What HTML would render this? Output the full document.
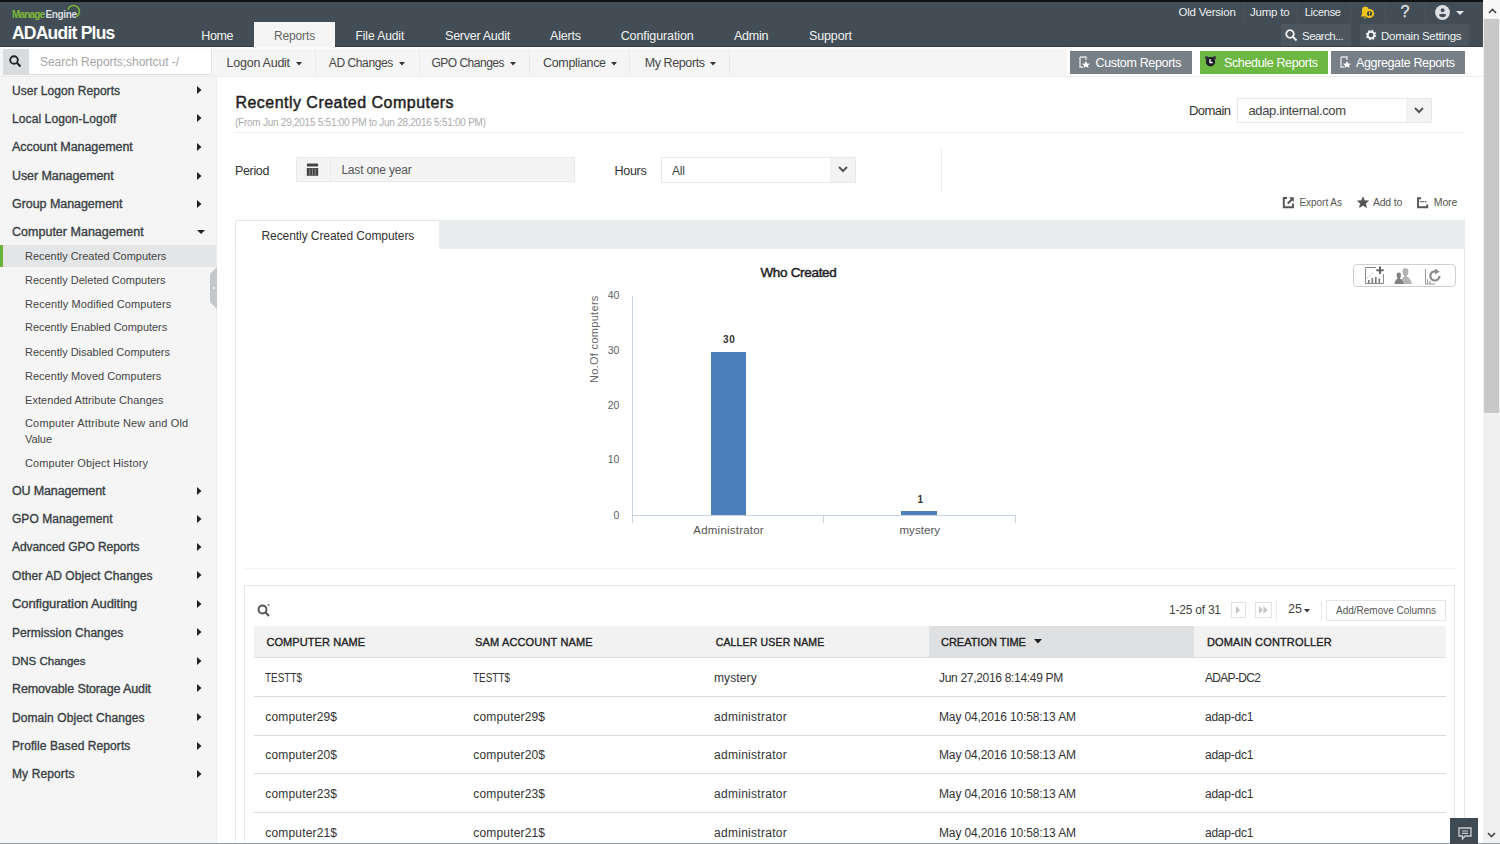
<!DOCTYPE html>
<html><head><meta charset="utf-8"><style>
html,body{margin:0;padding:0;width:1500px;height:844px;overflow:hidden;background:#fff;}
.t{position:absolute;white-space:nowrap;line-height:1;font-family:"Liberation Sans",sans-serif;}
svg{position:absolute;}
</style></head><body>
<div style="position:absolute;left:0px;top:0px;width:1483px;height:47px;background:#424d55;"></div>
<div style="position:absolute;left:0px;top:46px;width:1483px;height:1px;background:#384147;"></div>
<div style="position:absolute;left:0px;top:0px;width:1483px;height:2px;background:#101214;"></div>
<div class="t" style="left:12.0px;top:10.00px;font-size:10.0px;font-weight:bold;color:#7dbb3a;letter-spacing:-0.846px;">Manage</div>
<div class="t" style="left:45.5px;top:10.00px;font-size:10.0px;font-weight:bold;color:#d8dde0;letter-spacing:-0.367px;">Engine</div>
<svg style="left:64px;top:3px" width="20" height="18" viewBox="0 0 20 18"><path d="M3.86 6.45 A6 6 0 1 1 12.5 13.7" stroke="#74b53a" stroke-width="1.6" fill="none"/></svg>
<div class="t" style="left:12.0px;top:25.00px;font-size:17.5px;font-weight:bold;color:#ffffff;letter-spacing:-0.773px;">ADAudit Plus</div>
<div style="position:absolute;left:254px;top:22px;width:81px;height:25px;background:#f5f5f5;"></div>
<div class="t" style="left:201.3px;top:30.00px;font-size:12.5px;color:#f2f2f2;letter-spacing:-0.381px;">Home</div>
<div class="t" style="left:355.5px;top:30.00px;font-size:12.0px;color:#f2f2f2;letter-spacing:-0.062px;">File Audit</div>
<div class="t" style="left:445.1px;top:30.00px;font-size:12.5px;color:#f2f2f2;letter-spacing:-0.272px;">Server Audit</div>
<div class="t" style="left:550.0px;top:30.00px;font-size:12.5px;color:#f2f2f2;letter-spacing:-0.190px;">Alerts</div>
<div class="t" style="left:620.7px;top:30.00px;font-size:12.5px;color:#f2f2f2;letter-spacing:-0.112px;">Configuration</div>
<div class="t" style="left:734.0px;top:30.00px;font-size:12.5px;color:#f2f2f2;letter-spacing:-0.232px;">Admin</div>
<div class="t" style="left:809.0px;top:30.00px;font-size:12.5px;color:#f2f2f2;letter-spacing:-0.130px;">Support</div>
<div class="t" style="left:273.9px;top:30.00px;font-size:12.0px;color:#666;letter-spacing:-0.119px;">Reports</div>
<div class="t" style="left:1178.4px;top:7.00px;font-size:11.5px;color:#eef0f1;letter-spacing:-0.205px;">Old Version</div>
<div class="t" style="left:1250.0px;top:7.00px;font-size:11.5px;color:#eef0f1;letter-spacing:-0.217px;">Jump to</div>
<div class="t" style="left:1304.7px;top:7.00px;font-size:11.0px;color:#eef0f1;letter-spacing:-0.269px;">License</div>
<div style="position:absolute;left:1243px;top:3px;width:1px;height:19px;background:#4b555d;"></div>
<div style="position:absolute;left:1297px;top:3px;width:1px;height:19px;background:#4b555d;"></div>
<div style="position:absolute;left:1350px;top:3px;width:1px;height:19px;background:#4b555d;"></div>
<div style="position:absolute;left:1385px;top:3px;width:1px;height:19px;background:#4b555d;"></div>
<div style="position:absolute;left:1425px;top:3px;width:1px;height:19px;background:#4b555d;"></div>
<svg style="left:1359px;top:5px" width="17" height="15" viewBox="0 0 17 15"><path d="M1.5 11.5 L3 9.5 V5.5 Q3 1.5 6.5 1.5 Q9 1.5 9.8 4 L9 11.5Z" fill="#f0c419"/><circle cx="10.5" cy="8.5" r="4.6" fill="#f0c419"/><circle cx="10.5" cy="8.5" r="2.6" fill="#3d474e"/><rect x="10" y="6.6" width="1.1" height="2.6" fill="#f0c419"/><rect x="10" y="9.8" width="1.1" height="1" fill="#f0c419"/><path d="M4.5 12.5 Q6 14.5 7.5 12.5Z" fill="#f0c419"/></svg>
<div class="t" style="left:1400.5px;top:4.00px;font-size:16.0px;color:#d9dcde;letter-spacing:0.000px;-webkit-text-stroke:0.45px #d9dcde;">?</div>
<svg style="left:1435px;top:5px" width="15" height="15" viewBox="0 0 15 15"><circle cx="7.5" cy="7.5" r="7.4" fill="#dde0e2"/><circle cx="7.6" cy="5.2" r="1.9" fill="#434d55"/><path d="M4 9.5 Q7.6 8 11.2 9.5 Q11 12 7.6 12.2 Q4.2 12 4 9.5Z" fill="#434d55"/></svg>
<svg style="left:1456px;top:11px" width="8" height="4" viewBox="0 0 8 4"><path d="M0 0H8L4 4Z" fill="#e6e9ea"/></svg>
<div style="position:absolute;left:1281px;top:24px;width:70px;height:22px;background:#4b565e;"></div>
<div style="position:absolute;left:1360px;top:24px;width:109px;height:22px;background:#4b565e;"></div>
<svg style="left:1285px;top:29px" width="13" height="13" viewBox="0 0 13 13"><circle cx="5" cy="5" r="3.8" stroke="#f0f0f0" stroke-width="1.8" fill="none"/><path d="M7.8 7.8 L11.5 11.5" stroke="#f0f0f0" stroke-width="2"/></svg>
<div class="t" style="left:1302.0px;top:31.00px;font-size:11.5px;color:#eef0f1;letter-spacing:-0.540px;">Search...</div>
<svg style="left:1365px;top:29px" width="12" height="12" viewBox="0 0 12 12"><circle cx="6" cy="6" r="3.3" stroke="#eef0f1" stroke-width="2" fill="none"/><circle cx="6" cy="6" r="4.6" stroke="#eef0f1" stroke-width="1.3" stroke-dasharray="1.8 1.81" fill="none"/></svg>
<div class="t" style="left:1381.0px;top:31.00px;font-size:11.5px;color:#eef0f1;letter-spacing:-0.269px;">Domain Settings</div>
<div style="position:absolute;left:0px;top:47px;width:1483px;height:30px;background:#f5f5f5;"></div>
<div style="position:absolute;left:0px;top:47px;width:1483px;height:2px;background:#fbfbfb;"></div>
<div style="position:absolute;left:0px;top:76px;width:1483px;height:1px;background:#ebebeb;"></div>
<div style="position:absolute;left:3px;top:49px;width:26px;height:26px;background:#d8dcde;"></div>
<div style="position:absolute;left:29px;top:49px;width:183px;height:26px;background:#ffffff;box-sizing:border-box;border-bottom:1px solid #dedede;border-right:1px solid #e2e2e2;"></div>
<svg style="left:9px;top:55px" width="13" height="13" viewBox="0 0 13 13"><circle cx="5" cy="5" r="3.8" stroke="#222" stroke-width="1.9" fill="none"/><path d="M7.8 7.8 L11.5 11.5" stroke="#222" stroke-width="2.1"/></svg>
<div class="t" style="left:40.0px;top:56.00px;font-size:12.0px;color:#a5a5a5;letter-spacing:-0.042px;">Search Reports;shortcut -/</div>
<div class="t" style="left:226.6px;top:57.00px;font-size:12.5px;color:#454545;letter-spacing:-0.253px;">Logon Audit</div>
<svg style="left:295.5px;top:62px" width="6" height="4" viewBox="0 0 6 4"><path d="M0 0H6L3 3.5Z" fill="#333"/></svg>
<div class="t" style="left:328.8px;top:57.00px;font-size:12.0px;color:#454545;letter-spacing:-0.404px;">AD Changes</div>
<svg style="left:398.6px;top:62px" width="6" height="4" viewBox="0 0 6 4"><path d="M0 0H6L3 3.5Z" fill="#333"/></svg>
<div class="t" style="left:431.4px;top:57.00px;font-size:12.0px;color:#454545;letter-spacing:-0.494px;">GPO Changes</div>
<svg style="left:510px;top:62px" width="6" height="4" viewBox="0 0 6 4"><path d="M0 0H6L3 3.5Z" fill="#333"/></svg>
<div class="t" style="left:543.0px;top:57.00px;font-size:12.5px;color:#454545;letter-spacing:-0.333px;">Compliance</div>
<svg style="left:611px;top:62px" width="6" height="4" viewBox="0 0 6 4"><path d="M0 0H6L3 3.5Z" fill="#333"/></svg>
<div class="t" style="left:644.7px;top:57.00px;font-size:12.5px;color:#454545;letter-spacing:-0.400px;">My Reports</div>
<svg style="left:710.4px;top:62px" width="6" height="4" viewBox="0 0 6 4"><path d="M0 0H6L3 3.5Z" fill="#333"/></svg>
<div style="position:absolute;left:315px;top:50px;width:1px;height:24px;background:#e9e9e9;"></div>
<div style="position:absolute;left:419px;top:50px;width:1px;height:24px;background:#e9e9e9;"></div>
<div style="position:absolute;left:529px;top:50px;width:1px;height:24px;background:#e9e9e9;"></div>
<div style="position:absolute;left:629px;top:50px;width:1px;height:24px;background:#e9e9e9;"></div>
<div style="position:absolute;left:729px;top:50px;width:1px;height:24px;background:#e9e9e9;"></div>
<div style="position:absolute;left:1067px;top:47px;width:416px;height:29px;background:#ffffff;"></div>
<div style="position:absolute;left:1070px;top:51px;width:122px;height:23px;background:#788087;"></div>
<div style="position:absolute;left:1070px;top:51px;width:122px;height:1px;background:#6f777d;"></div>
<div style="position:absolute;left:1200px;top:51px;width:128px;height:23px;background:#6db842;"></div>
<div style="position:absolute;left:1331px;top:51px;width:134px;height:23px;background:#788087;"></div>
<div style="position:absolute;left:1331px;top:51px;width:134px;height:1px;background:#6f777d;"></div>
<div class="t" style="left:1095.5px;top:57.00px;font-size:12.5px;color:#ffffff;letter-spacing:-0.339px;">Custom Reports</div>
<div class="t" style="left:1224.0px;top:57.00px;font-size:12.5px;color:#ffffff;letter-spacing:-0.357px;">Schedule Reports</div>
<div class="t" style="left:1356.0px;top:57.00px;font-size:12.5px;color:#ffffff;letter-spacing:-0.370px;">Aggregate Reports</div>
<svg style="left:1079px;top:56px" width="11" height="12" viewBox="0 0 11 12"><path d="M1 1H7V4" stroke="#dfe2e4" stroke-width="1.4" fill="none"/><path d="M1 1V11H4" stroke="#dfe2e4" stroke-width="1.4" fill="none"/><path d="M7 5 L8.2 7.6 L11 7.8 L8.9 9.5 L9.6 12 L7 10.6 L4.4 12 L5.1 9.5 L3 7.8 L5.8 7.6Z" fill="#fff"/></svg>
<svg style="left:1340px;top:56px" width="11" height="12" viewBox="0 0 11 12"><path d="M1 1H7V4" stroke="#dfe2e4" stroke-width="1.4" fill="none"/><path d="M1 1V11H4" stroke="#dfe2e4" stroke-width="1.4" fill="none"/><path d="M7 5 L8.2 7.6 L11 7.8 L8.9 9.5 L9.6 12 L7 10.6 L4.4 12 L5.1 9.5 L3 7.8 L5.8 7.6Z" fill="#fff"/></svg>
<svg style="left:1204px;top:55px" width="13" height="13" viewBox="0 0 13 13"><circle cx="2.6" cy="2.8" r="1.8" fill="#3a3d40"/><circle cx="10.4" cy="2.8" r="1.8" fill="#3a3d40"/><circle cx="6.5" cy="6.8" r="4.7" fill="#1c1b26"/><path d="M6 4V7.5H8.6" stroke="#fff" stroke-width="1.3" fill="none"/></svg>
<div style="position:absolute;left:0px;top:77px;width:216px;height:767px;background:#f5f5f5;"></div>
<div style="position:absolute;left:216px;top:77px;width:1px;height:767px;background:#ececec;"></div>
<div style="position:absolute;left:0px;top:245px;width:216px;height:22px;background:#e4e5e6;"></div>
<div style="position:absolute;left:0px;top:245px;width:3px;height:22px;background:#6ab23d;"></div>
<svg style="left:209px;top:267px" width="8" height="42" viewBox="0 0 8 42"><path d="M8 0V42L1 35V7Z" fill="#c3c7c9"/><path d="M3.5 21L5.5 19.5V22.5Z" fill="#fff"/></svg>
<div class="t" style="left:12.0px;top:85.00px;font-size:12.0px;color:#3a3f44;letter-spacing:0.036px;-webkit-text-stroke:0.35px #3a3f44;">User Logon Reports</div>
<svg style="left:197px;top:86.1px" width="5" height="8" viewBox="0 0 5 8"><path d="M0 0V8L4.5 4Z" fill="#222"/></svg>
<div class="t" style="left:12.0px;top:113.00px;font-size:12.0px;color:#3a3f44;letter-spacing:0.099px;-webkit-text-stroke:0.35px #3a3f44;">Local Logon-Logoff</div>
<svg style="left:197px;top:114.2px" width="5" height="8" viewBox="0 0 5 8"><path d="M0 0V8L4.5 4Z" fill="#222"/></svg>
<div class="t" style="left:12.0px;top:141.00px;font-size:12.5px;color:#3a3f44;letter-spacing:-0.047px;-webkit-text-stroke:0.35px #3a3f44;">Account Management</div>
<svg style="left:197px;top:142.6px" width="5" height="8" viewBox="0 0 5 8"><path d="M0 0V8L4.5 4Z" fill="#222"/></svg>
<div class="t" style="left:12.0px;top:170.00px;font-size:12.5px;color:#3a3f44;letter-spacing:-0.080px;-webkit-text-stroke:0.35px #3a3f44;">User Management</div>
<svg style="left:197px;top:171.6px" width="5" height="8" viewBox="0 0 5 8"><path d="M0 0V8L4.5 4Z" fill="#222"/></svg>
<div class="t" style="left:12.0px;top:198.00px;font-size:12.5px;color:#3a3f44;letter-spacing:-0.051px;-webkit-text-stroke:0.35px #3a3f44;">Group Management</div>
<svg style="left:197px;top:199.6px" width="5" height="8" viewBox="0 0 5 8"><path d="M0 0V8L4.5 4Z" fill="#222"/></svg>
<div class="t" style="left:12.0px;top:226.00px;font-size:12.5px;color:#3a3f44;letter-spacing:0.016px;-webkit-text-stroke:0.35px #3a3f44;">Computer Management</div>
<svg style="left:197px;top:229.6px" width="8" height="5" viewBox="0 0 8 5"><path d="M0 0H8L4 4Z" fill="#222"/></svg>
<div class="t" style="left:12.0px;top:485.00px;font-size:12.5px;color:#3a3f44;letter-spacing:-0.148px;-webkit-text-stroke:0.35px #3a3f44;">OU Management</div>
<svg style="left:197px;top:486.8px" width="5" height="8" viewBox="0 0 5 8"><path d="M0 0V8L4.5 4Z" fill="#222"/></svg>
<div class="t" style="left:12.0px;top:513.00px;font-size:12.0px;color:#3a3f44;letter-spacing:0.035px;-webkit-text-stroke:0.35px #3a3f44;">GPO Management</div>
<svg style="left:197px;top:514.7px" width="5" height="8" viewBox="0 0 5 8"><path d="M0 0V8L4.5 4Z" fill="#222"/></svg>
<div class="t" style="left:12.0px;top:541.00px;font-size:12.0px;color:#3a3f44;letter-spacing:-0.059px;-webkit-text-stroke:0.35px #3a3f44;">Advanced GPO Reports</div>
<svg style="left:197px;top:542.6px" width="5" height="8" viewBox="0 0 5 8"><path d="M0 0V8L4.5 4Z" fill="#222"/></svg>
<div class="t" style="left:12.0px;top:570.00px;font-size:12.0px;color:#3a3f44;letter-spacing:0.076px;-webkit-text-stroke:0.35px #3a3f44;">Other AD Object Changes</div>
<svg style="left:197px;top:571.0px" width="5" height="8" viewBox="0 0 5 8"><path d="M0 0V8L4.5 4Z" fill="#222"/></svg>
<div class="t" style="left:12.0px;top:597.00px;font-size:13.0px;color:#3a3f44;letter-spacing:-0.090px;-webkit-text-stroke:0.35px #3a3f44;">Configuration Auditing</div>
<svg style="left:197px;top:599.8px" width="5" height="8" viewBox="0 0 5 8"><path d="M0 0V8L4.5 4Z" fill="#222"/></svg>
<div class="t" style="left:12.0px;top:627.00px;font-size:12.0px;color:#3a3f44;letter-spacing:0.029px;-webkit-text-stroke:0.35px #3a3f44;">Permission Changes</div>
<svg style="left:197px;top:628.2px" width="5" height="8" viewBox="0 0 5 8"><path d="M0 0V8L4.5 4Z" fill="#222"/></svg>
<div class="t" style="left:12.0px;top:656.00px;font-size:11.5px;color:#3a3f44;letter-spacing:-0.001px;-webkit-text-stroke:0.35px #3a3f44;">DNS Changes</div>
<svg style="left:197px;top:656.5px" width="5" height="8" viewBox="0 0 5 8"><path d="M0 0V8L4.5 4Z" fill="#222"/></svg>
<div class="t" style="left:12.0px;top:683.00px;font-size:12.5px;color:#3a3f44;letter-spacing:-0.125px;-webkit-text-stroke:0.35px #3a3f44;">Removable Storage Audit</div>
<svg style="left:197px;top:684.4px" width="5" height="8" viewBox="0 0 5 8"><path d="M0 0V8L4.5 4Z" fill="#222"/></svg>
<div class="t" style="left:12.0px;top:712.00px;font-size:12.0px;color:#3a3f44;letter-spacing:0.084px;-webkit-text-stroke:0.35px #3a3f44;">Domain Object Changes</div>
<svg style="left:197px;top:713.2px" width="5" height="8" viewBox="0 0 5 8"><path d="M0 0V8L4.5 4Z" fill="#222"/></svg>
<div class="t" style="left:12.0px;top:740.00px;font-size:12.0px;color:#3a3f44;letter-spacing:0.079px;-webkit-text-stroke:0.35px #3a3f44;">Profile Based Reports</div>
<svg style="left:197px;top:741.6px" width="5" height="8" viewBox="0 0 5 8"><path d="M0 0V8L4.5 4Z" fill="#222"/></svg>
<div class="t" style="left:12.0px;top:768.00px;font-size:12.0px;color:#3a3f44;letter-spacing:0.117px;-webkit-text-stroke:0.35px #3a3f44;">My Reports</div>
<svg style="left:197px;top:770.0px" width="5" height="8" viewBox="0 0 5 8"><path d="M0 0V8L4.5 4Z" fill="#222"/></svg>
<div class="t" style="left:25.0px;top:251.00px;font-size:11.0px;color:#454545;letter-spacing:-0.021px;">Recently Created Computers</div>
<div class="t" style="left:25.0px;top:275.00px;font-size:11.0px;color:#454545;letter-spacing:-0.005px;">Recently Deleted Computers</div>
<div class="t" style="left:25.0px;top:299.00px;font-size:11.0px;color:#454545;letter-spacing:0.074px;">Recently Modified Computers</div>
<div class="t" style="left:25.0px;top:322.00px;font-size:11.0px;color:#454545;letter-spacing:-0.035px;">Recently Enabled Computers</div>
<div class="t" style="left:25.0px;top:347.00px;font-size:11.0px;color:#454545;letter-spacing:-0.019px;">Recently Disabled Computers</div>
<div class="t" style="left:25.0px;top:371.00px;font-size:11.0px;color:#454545;letter-spacing:0.021px;">Recently Moved Computers</div>
<div class="t" style="left:25.0px;top:395.00px;font-size:11.0px;color:#454545;letter-spacing:0.061px;">Extended Attribute Changes</div>
<div class="t" style="left:25.0px;top:418.00px;font-size:11.0px;color:#454545;letter-spacing:0.167px;">Computer Attribute New and Old</div>
<div class="t" style="left:25.0px;top:434.00px;font-size:11.0px;color:#454545;letter-spacing:-0.079px;">Value</div>
<div class="t" style="left:25.0px;top:458.00px;font-size:11.0px;color:#454545;letter-spacing:0.113px;">Computer Object History</div>
<div class="t" style="left:235.4px;top:95.00px;font-size:16.0px;color:#1e1e1e;letter-spacing:0.476px;-webkit-text-stroke:0.45px #1e1e1e;">Recently Created Computers</div>
<div class="t" style="left:235.0px;top:118.00px;font-size:10.0px;color:#ababab;letter-spacing:-0.252px;">(From Jun 29,2015 5:51:00 PM to Jun 28,2016 5:51:00 PM)</div>
<div style="position:absolute;left:235px;top:132px;width:1228px;height:1px;background:#f0f0f0;"></div>
<div class="t" style="left:1189.0px;top:104.00px;font-size:13.0px;color:#333;letter-spacing:-0.559px;">Domain</div>
<div style="position:absolute;left:1237px;top:98px;width:195px;height:25px;background:#fff;box-sizing:border-box;border:1px solid #e8e8e8;"></div>
<div style="position:absolute;left:1406px;top:99px;width:25px;height:23px;background:#f3f3f3;"></div>
<div class="t" style="left:1248.5px;top:104.00px;font-size:13.0px;color:#444;letter-spacing:-0.364px;">adap.internal.com</div>
<svg style="left:1414px;top:107px" width="10" height="7" viewBox="0 0 10 7"><path d="M1 1L5 5L9 1" stroke="#555" stroke-width="2" fill="none"/></svg>
<div class="t" style="left:235.0px;top:165.00px;font-size:12.5px;color:#333;letter-spacing:-0.346px;">Period</div>
<div style="position:absolute;left:296px;top:157px;width:279px;height:25px;background:#f4f4f4;box-sizing:border-box;border:1px solid #e9e9e9;"></div>
<div style="position:absolute;left:330px;top:158px;width:1px;height:23px;background:#e9e9e9;"></div>
<svg style="left:306px;top:163px" width="13" height="13" viewBox="0 0 13 13"><rect x="0.8" y="0.6" width="11.4" height="3" rx="1.2" fill="#444"/><rect x="0.8" y="5" width="11.4" height="7.8" fill="#444"/><g fill="#9a9a9a"><rect x="3.4" y="5.4" width="0.8" height="7"/><rect x="6.1" y="5.4" width="0.8" height="7"/><rect x="8.8" y="5.4" width="0.8" height="7"/></g></svg>
<div class="t" style="left:341.4px;top:164.00px;font-size:12.0px;color:#555;letter-spacing:-0.201px;">Last one year</div>
<div class="t" style="left:614.4px;top:165.00px;font-size:12.5px;color:#333;letter-spacing:-0.235px;">Hours</div>
<div style="position:absolute;left:661px;top:157px;width:195px;height:26px;background:#fff;box-sizing:border-box;border:1px solid #e9e9e9;"></div>
<div style="position:absolute;left:830px;top:158px;width:25px;height:24px;background:#f3f3f3;"></div>
<div class="t" style="left:672.0px;top:165.00px;font-size:12.0px;color:#444;letter-spacing:-0.168px;">All</div>
<svg style="left:838px;top:166px" width="10" height="7" viewBox="0 0 10 7"><path d="M1 1L5 5L9 1" stroke="#555" stroke-width="2" fill="none"/></svg>
<div style="position:absolute;left:941px;top:148px;width:1px;height:44px;background:#ececec;"></div>
<svg style="left:1282px;top:196px" width="13" height="13" viewBox="0 0 13 13"><path d="M5 2H1.8V11.2H11V7.5" stroke="#555" stroke-width="1.9" fill="none"/><path d="M5.8 7.5L10 3.3" stroke="#555" stroke-width="2"/><path d="M7 1.2H11.8V6Z" fill="#555"/></svg>
<div class="t" style="left:1299.4px;top:198.00px;font-size:10.0px;color:#555;letter-spacing:-0.025px;">Export As</div>
<svg style="left:1357px;top:197px" width="12" height="11" viewBox="0 0 24 23"><path d="M12 0L15.2 7.6L23.5 8.2L17.2 13.5L19.3 22L12 17.3L4.7 22L6.8 13.5L0.5 8.2L8.8 7.6Z" fill="#555" stroke="#555" stroke-width="1.5" stroke-linejoin="round"/></svg>
<div class="t" style="left:1372.9px;top:197.00px;font-size:10.5px;color:#555;letter-spacing:-0.191px;">Add to</div>
<svg style="left:1416px;top:196px" width="13" height="13" viewBox="0 0 13 13"><path d="M5 2.2H2V11.2H11.2V8.5" stroke="#555" stroke-width="1.9" fill="none"/><path d="M4.2 5.6H11.2" stroke="#555" stroke-width="1.2" stroke-dasharray="1.6 0.7"/></svg>
<div class="t" style="left:1433.8px;top:197.00px;font-size:10.5px;color:#555;letter-spacing:-0.140px;">More</div>
<div style="position:absolute;left:235px;top:220px;width:1230px;height:29px;background:#e9eced;"></div>
<div style="position:absolute;left:235px;top:220px;width:204px;height:29px;background:#ffffff;box-sizing:border-box;border:1px solid #e6e6e6;border-bottom:none;border-right:none;"></div>
<div class="t" style="left:261.5px;top:230.00px;font-size:12.0px;color:#333;letter-spacing:-0.077px;">Recently Created Computers</div>
<div style="position:absolute;left:235px;top:249px;width:1px;height:595px;background:#e8e8e8;"></div>
<div style="position:absolute;left:1464px;top:249px;width:1px;height:595px;background:#e8e8e8;"></div>
<div class="t" style="left:760.4px;top:266.00px;font-size:13.5px;color:#222;letter-spacing:-0.313px;-webkit-text-stroke:0.45px #222;">Who Created</div>
<div style="position:absolute;left:1353px;top:264px;width:103px;height:23px;background:#fff;box-sizing:border-box;border:1px solid #cfcfcf;border-radius:4px;"></div>
<svg style="left:1364px;top:266px" width="22" height="19" viewBox="0 0 22 19"><path d="M1.5 1.5H12M1.5 1.5V17.5H19.5V8" stroke="#8a8a8a" stroke-width="1" fill="none"/><path d="M3 12L9 7" stroke="#aaa" stroke-width="1" stroke-dasharray="1.2 1"/><rect x="4" y="14" width="1.6" height="3" fill="#7a7a7a"/><rect x="7.5" y="12" width="1.6" height="5" fill="#7a7a7a"/><rect x="11" y="11" width="1.6" height="6" fill="#7a7a7a"/><rect x="14.5" y="12.5" width="1.6" height="4.5" fill="#7a7a7a"/><path d="M16 0.5V8M12.3 4.2H19.7" stroke="#666" stroke-width="2"/></svg>
<svg style="left:1394px;top:267px" width="19" height="18" viewBox="0 0 19 18"><path d="M6.5 17 Q7 11 10.5 9.5 Q8.5 7.5 8.5 4.5 Q8.5 1 11.5 1 Q14.5 1 14.5 4.5 Q14.5 7.5 12.5 9.5 Q17 11 18 17Z" fill="#b4b4b4"/><path d="M0.5 17 Q1 12.5 3.8 11.5 Q2.6 10 2.6 7.8 Q2.6 5.5 4.8 5.5 Q7 5.5 7 7.8 Q7 10 5.8 11.5 Q9 12.5 9.5 17Z" fill="#808080"/></svg>
<svg style="left:1424px;top:267px" width="19" height="18" viewBox="0 0 19 18"><path d="M1.5 2V17H11" stroke="#9a9a9a" stroke-width="1" fill="none"/><rect x="3" y="12" width="1.2" height="5" fill="#aaa"/><rect x="5.5" y="14" width="1.2" height="3" fill="#aaa"/><path d="M15.5 9 A4.6 4.6 0 1 1 12.5 4.6" stroke="#8a8a8a" stroke-width="2.2" fill="none"/><path d="M11 1.5L15.5 4.6L11.2 7.6Z" fill="#8a8a8a"/></svg>
<div style="position:absolute;left:632px;top:296px;width:1px;height:227px;background:#c8d3e0;"></div>
<div style="position:absolute;left:632px;top:515px;width:384px;height:1px;background:#c8d3e0;"></div>
<div style="position:absolute;left:823px;top:515px;width:1px;height:8px;background:#c8d3e0;"></div>
<div style="position:absolute;left:1015px;top:515px;width:1px;height:8px;background:#c8d3e0;"></div>
<div class="t" style="left:607.7px;top:290.00px;font-size:10.5px;color:#606060;letter-spacing:0.000px;">40</div>
<div class="t" style="left:607.7px;top:345.00px;font-size:10.5px;color:#606060;letter-spacing:0.000px;">30</div>
<div class="t" style="left:607.7px;top:400.00px;font-size:10.5px;color:#606060;letter-spacing:0.000px;">20</div>
<div class="t" style="left:607.7px;top:454.00px;font-size:10.5px;color:#606060;letter-spacing:0.000px;">10</div>
<div class="t" style="left:613.5px;top:510.00px;font-size:10.5px;color:#606060;letter-spacing:0.000px;">0</div>
<div style="position:absolute;left:711px;top:352px;width:35px;height:163px;background:#4a81bd;"></div>
<div style="position:absolute;left:901px;top:511px;width:36px;height:4px;background:#4a81bd;"></div>
<div class="t" style="left:723.0px;top:335.00px;font-size:10.0px;font-weight:bold;color:#333;letter-spacing:0.578px;">30</div>
<div class="t" style="left:917.4px;top:495.00px;font-size:10.0px;font-weight:bold;color:#333;letter-spacing:0.000px;">1</div>
<div class="t" style="left:693.3px;top:525.00px;font-size:11.5px;color:#555;letter-spacing:0.222px;">Administrator</div>
<div class="t" style="left:899.5px;top:525.00px;font-size:11.5px;color:#555;letter-spacing:0.042px;">mystery</div>
<div class="t" style="left:588.5px;top:383px;transform-origin:0 0;transform:rotate(-90deg);font-size:11px;color:#666;letter-spacing:0.3px;">No.Of computers</div>
<div style="position:absolute;left:244px;top:585px;width:1211px;height:259px;background:#fff;box-sizing:border-box;border:1px solid #e8e8e8;border-bottom:none;"></div>
<svg style="left:257px;top:603px" width="14" height="14" viewBox="0 0 14 14"><circle cx="5.5" cy="6.5" r="4" stroke="#555" stroke-width="1.9" fill="none"/><path d="M8.3 9.3L12 13" stroke="#555" stroke-width="2"/><circle cx="11.5" cy="2" r="1" fill="#777"/></svg>
<div class="t" style="left:1169.0px;top:604.00px;font-size:12.0px;color:#444;letter-spacing:-0.226px;">1-25 of 31</div>
<div style="position:absolute;left:1231px;top:602px;width:15px;height:16px;background:#fff;box-sizing:border-box;border:1px solid #e2e2e2;"></div>
<div style="position:absolute;left:1255px;top:602px;width:17px;height:16px;background:#fff;box-sizing:border-box;border:1px solid #e2e2e2;"></div>
<svg style="left:1236px;top:606px" width="5" height="8" viewBox="0 0 5 8"><path d="M0 0V8L4 4Z" fill="#c4c4c4"/></svg>
<svg style="left:1259px;top:606px" width="10" height="8" viewBox="0 0 10 8"><path d="M0 0V8L4 4Z M4.5 0V8L8.5 4Z" fill="#c4c4c4"/></svg>
<div style="position:absolute;left:1276px;top:600px;width:1px;height:20px;background:#eaeaea;"></div>
<div class="t" style="left:1288.0px;top:603.00px;font-size:12.5px;color:#444;letter-spacing:0.098px;">25</div>
<svg style="left:1304px;top:609px" width="6" height="4" viewBox="0 0 6 4"><path d="M0 0H6L3 3.5Z" fill="#333"/></svg>
<div style="position:absolute;left:1321px;top:600px;width:1px;height:20px;background:#eaeaea;"></div>
<div style="position:absolute;left:1326px;top:600px;width:120px;height:21px;background:#fff;box-sizing:border-box;border:1px solid #e6e6e6;"></div>
<div class="t" style="left:1336.0px;top:606.00px;font-size:10.0px;color:#555;letter-spacing:-0.002px;">Add/Remove Columns</div>
<div style="position:absolute;left:254px;top:626px;width:1192px;height:32px;background:#f2f2f2;"></div>
<div style="position:absolute;left:929px;top:626px;width:265px;height:32px;background:#dfe0e1;"></div>
<div style="position:absolute;left:254px;top:657px;width:1192px;height:1px;background:#dcdcdc;"></div>
<div class="t" style="left:266.4px;top:637.00px;font-size:11.0px;color:#222;letter-spacing:0.085px;-webkit-text-stroke:0.35px #222;">COMPUTER NAME</div>
<div class="t" style="left:475.0px;top:637.00px;font-size:11.0px;color:#222;letter-spacing:0.159px;-webkit-text-stroke:0.35px #222;">SAM ACCOUNT NAME</div>
<div class="t" style="left:715.7px;top:637.00px;font-size:10.5px;color:#222;letter-spacing:0.160px;-webkit-text-stroke:0.35px #222;">CALLER USER NAME</div>
<div class="t" style="left:941.0px;top:637.00px;font-size:11.0px;color:#222;letter-spacing:-0.021px;-webkit-text-stroke:0.35px #222;">CREATION TIME</div>
<div class="t" style="left:1207.0px;top:637.00px;font-size:11.0px;color:#222;letter-spacing:0.148px;-webkit-text-stroke:0.35px #222;">DOMAIN CONTROLLER</div>
<svg style="left:1034px;top:639px" width="8" height="5" viewBox="0 0 8 5"><path d="M0 0H8L4 4.5Z" fill="#222"/></svg>
<div class="t" style="left:265.3px;top:672.00px;font-size:12.0px;color:#333;letter-spacing:0.000px;transform:scaleX(0.83);transform-origin:0 0;">TESTT$</div>
<div class="t" style="left:473.3px;top:672.00px;font-size:12.0px;color:#333;letter-spacing:0.000px;transform:scaleX(0.83);transform-origin:0 0;">TESTT$</div>
<div class="t" style="left:714.0px;top:672.00px;font-size:12.0px;color:#333;letter-spacing:0.117px;">mystery</div>
<div class="t" style="left:939.0px;top:672.00px;font-size:12.0px;color:#333;letter-spacing:-0.307px;">Jun 27,2016 8:14:49 PM</div>
<div class="t" style="left:1205.0px;top:672.00px;font-size:12.0px;color:#333;letter-spacing:-0.697px;">ADAP-DC2</div>
<div class="t" style="left:265.3px;top:711.00px;font-size:12.0px;color:#333;letter-spacing:0.166px;">computer29$</div>
<div class="t" style="left:473.3px;top:711.00px;font-size:12.0px;color:#333;letter-spacing:0.166px;">computer29$</div>
<div class="t" style="left:714.0px;top:711.00px;font-size:12.0px;color:#333;letter-spacing:0.279px;">administrator</div>
<div class="t" style="left:939.0px;top:711.00px;font-size:12.0px;color:#333;letter-spacing:-0.140px;">May 04,2016 10:58:13 AM</div>
<div class="t" style="left:1205.0px;top:711.00px;font-size:12.0px;color:#333;letter-spacing:-0.248px;">adap-dc1</div>
<div class="t" style="left:265.3px;top:749.00px;font-size:12.0px;color:#333;letter-spacing:0.166px;">computer20$</div>
<div class="t" style="left:473.3px;top:749.00px;font-size:12.0px;color:#333;letter-spacing:0.166px;">computer20$</div>
<div class="t" style="left:714.0px;top:749.00px;font-size:12.0px;color:#333;letter-spacing:0.279px;">administrator</div>
<div class="t" style="left:939.0px;top:749.00px;font-size:12.0px;color:#333;letter-spacing:-0.140px;">May 04,2016 10:58:13 AM</div>
<div class="t" style="left:1205.0px;top:749.00px;font-size:12.0px;color:#333;letter-spacing:-0.248px;">adap-dc1</div>
<div class="t" style="left:265.3px;top:788.00px;font-size:12.0px;color:#333;letter-spacing:0.166px;">computer23$</div>
<div class="t" style="left:473.3px;top:788.00px;font-size:12.0px;color:#333;letter-spacing:0.166px;">computer23$</div>
<div class="t" style="left:714.0px;top:788.00px;font-size:12.0px;color:#333;letter-spacing:0.279px;">administrator</div>
<div class="t" style="left:939.0px;top:788.00px;font-size:12.0px;color:#333;letter-spacing:-0.140px;">May 04,2016 10:58:13 AM</div>
<div class="t" style="left:1205.0px;top:788.00px;font-size:12.0px;color:#333;letter-spacing:-0.248px;">adap-dc1</div>
<div class="t" style="left:265.3px;top:827.00px;font-size:12.0px;color:#333;letter-spacing:0.166px;">computer21$</div>
<div class="t" style="left:473.3px;top:827.00px;font-size:12.0px;color:#333;letter-spacing:0.166px;">computer21$</div>
<div class="t" style="left:714.0px;top:827.00px;font-size:12.0px;color:#333;letter-spacing:0.279px;">administrator</div>
<div class="t" style="left:939.0px;top:827.00px;font-size:12.0px;color:#333;letter-spacing:-0.140px;">May 04,2016 10:58:13 AM</div>
<div class="t" style="left:1205.0px;top:827.00px;font-size:12.0px;color:#333;letter-spacing:-0.248px;">adap-dc1</div>
<div style="position:absolute;left:254px;top:696px;width:1192px;height:1px;background:#dcdcdc;"></div>
<div style="position:absolute;left:254px;top:735px;width:1192px;height:1px;background:#dcdcdc;"></div>
<div style="position:absolute;left:254px;top:773px;width:1192px;height:1px;background:#dcdcdc;"></div>
<div style="position:absolute;left:254px;top:812px;width:1192px;height:1px;background:#dcdcdc;"></div>
<div style="position:absolute;left:1483px;top:0px;width:17px;height:844px;background:#f0f0f0;"></div>
<div style="position:absolute;left:1483px;top:0px;width:17px;height:18px;background:#f7f7f7;"></div>
<svg style="left:1488px;top:8px" width="9" height="6" viewBox="0 0 9 6"><path d="M1 5L4.5 1.5L8 5" stroke="#444" stroke-width="1.6" fill="none"/></svg>
<svg style="left:1487px;top:832px" width="9" height="6" viewBox="0 0 9 6"><path d="M1 1L4.5 4.5L8 1" stroke="#444" stroke-width="1.6" fill="none"/></svg>
<div style="position:absolute;left:1484px;top:19px;width:15px;height:394px;background:#c8c8c8;"></div>
<div style="position:absolute;left:0px;top:843px;width:1500px;height:1px;background:#939ca3;"></div>
<div style="position:absolute;left:244px;top:568px;width:1212px;height:1px;background:#f4f4f4;"></div>
<div style="position:absolute;left:1450px;top:818px;width:28px;height:26px;background:#3f4a52;"></div>
<svg style="left:1458px;top:827px" width="14" height="13" viewBox="0 0 14 13"><path d="M1 1H13V9H7L4.5 12V9H1Z" stroke="#c9ced1" stroke-width="1.3" fill="none"/><path d="M4 4H10M4 6.3H10" stroke="#c9ced1" stroke-width="1.2"/></svg>
</body></html>
